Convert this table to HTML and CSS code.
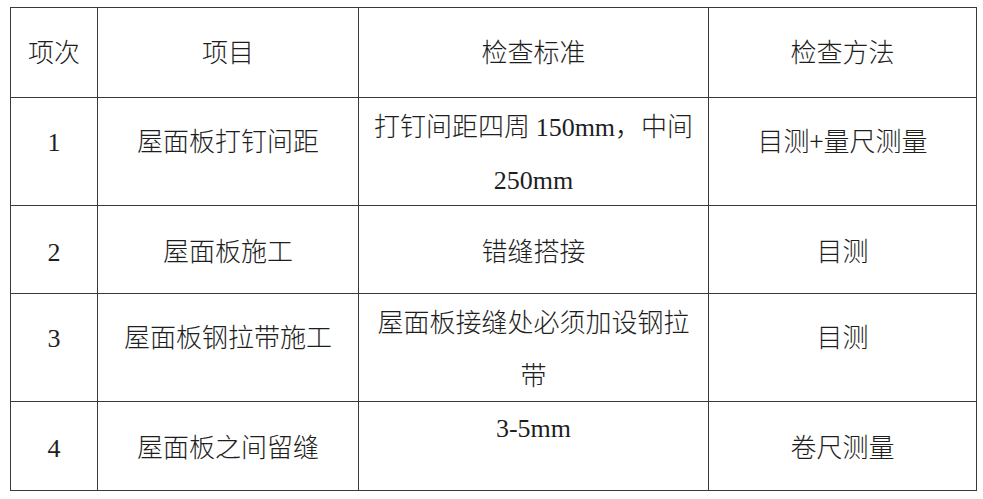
FILE: index.html
```html
<!DOCTYPE html>
<html lang="zh-CN">
<head>
<meta charset="utf-8">
<title>检查标准</title>
<link rel="stylesheet" href="styles.css">
</head>
<body>
<table class="grid">
  <colgroup>
    <col class="c1"><col class="c2"><col class="c3"><col class="c4">
  </colgroup>
  <tr class="r-head">
    <td>项次</td><td>项目</td><td>检查标准</td><td>检查方法</td>
  </tr>
  <tr class="r-tall">
    <td class="up"><span class="lat">1</span></td><td class="up">屋面板打钉间距</td><td class="multi">打钉间距四周 <span class="lat">150mm</span>，中间<br><span class="lat">250mm</span></td><td class="up">目测+量尺测量</td>
  </tr>
  <tr class="r-short">
    <td><span class="lat">2</span></td><td>屋面板施工</td><td>错缝搭接</td><td>目测</td>
  </tr>
  <tr class="r-tall">
    <td class="up"><span class="lat">3</span></td><td class="up">屋面板钢拉带施工</td><td class="multi">屋面板接缝处必须加设钢拉<br>带</td><td class="up">目测</td>
  </tr>
  <tr class="r-last">
    <td><span class="lat">4</span></td><td>屋面板之间留缝</td><td class="top"><span class="lat">3-5mm</span></td><td>卷尺测量</td>
  </tr>
</table>
</body>
</html>
```
FILE: styles.css
```css
html, body {
  background: #ffffff;
}
body {
  margin: 7px 0 0 10px;
  font-family: "Noto Sans CJK SC", sans-serif;
  color: #1e1e1e;
}
.grid {
  border-collapse: collapse;
  table-layout: fixed;
  width: 966px;
}
.c1 { width: 87px; }
.c2 { width: 261px; }
.c3 { width: 350px; }
.c4 { width: 268px; }
.grid td {
  border: 1px solid #3a3a3a;
  padding: 0;
  text-align: center;
  vertical-align: middle;
  font-size: 26px;
  font-weight: 300;
  line-height: 30px;
  white-space: nowrap;
  overflow: hidden;
}
.lat {
  font-family: "Liberation Serif", serif;
  font-weight: 400;
  line-height: 0;
}
.r-head { height: 90px; }
.r-head td { padding-bottom: 4px; }
.r-tall { height: 108px; }
.r-short { height: 88px; }
.r-last { height: 89px; }
.grid td.up { padding-bottom: 24px; }
.grid td.multi { line-height: 53px; padding-bottom: 1px; }
.grid td.top { vertical-align: top; line-height: 48px; }
```
